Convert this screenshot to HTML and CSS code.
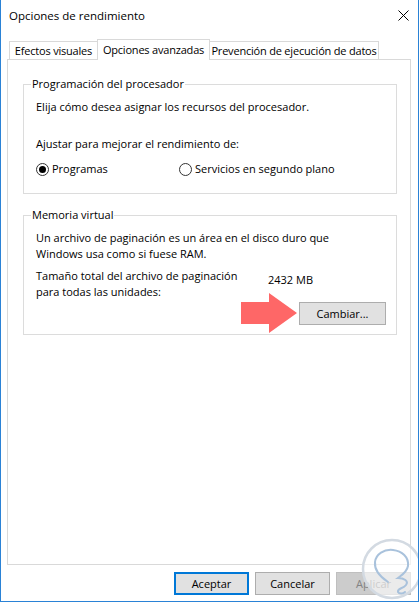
FILE: index.html
```html
<!DOCTYPE html>
<html lang="es">
<head>
<meta charset="utf-8">
<title>Opciones de rendimiento</title>
<link rel="stylesheet" href="styles.css">
</head>
<body>
<div class="window">
  <div class="titlebar">
    <span class="title">Opciones de rendimiento</span>
    <svg class="close" width="11" height="11" viewBox="0 0 11 11"><path d="M0.5 0.5L10.5 10.5M10.5 0.5L0.5 10.5" stroke="#000" stroke-width="1" fill="none"/></svg>
  </div>
  <div class="sheet">
    <div class="tabs">
      <div class="tab tab-first">Efectos visuales</div>
      <div class="tab tab-active">Opciones avanzadas</div>
      <div class="tab tab-last">Prevención de ejecución de datos</div>
    </div>
    <div class="panel">
      <fieldset class="group group-cpu">
        <legend>Programación del procesador</legend>
        <p class="line">Elija cómo desea asignar los recursos del procesador.</p>
        <p class="line line-adjust">Ajustar para mejorar el rendimiento de:</p>
        <div class="radios">
          <label class="radio radio-first"><span class="dot dot-on"></span>Programas</label>
          <label class="radio"><span class="dot"></span>Servicios en segundo plano</label>
        </div>
      </fieldset>
      <fieldset class="group group-mem">
        <legend>Memoria virtual</legend>
        <p class="line">Un archivo de paginación es un área en el disco duro que<br>Windows usa como si fuese RAM.</p>
        <div class="size-row">
          <p class="line size-label">Tamaño total del archivo de paginación<br>para todas las unidades:</p>
          <span class="size-value">2432 MB</span>
        </div>
        <div class="change-row">
          <svg class="arrow" width="57" height="40" viewBox="0 0 57 40"><path d="M0 9H28V0L56 20L28 40V31H0Z" fill="#fe6767"/></svg>
          <span class="btn btn-change">Cambiar...</span>
        </div>
      </fieldset>
    </div>
  </div>
  <div class="buttons">
    <span class="btn btn-default">Aceptar</span>
    <span class="btn">Cancelar</span>
    <span class="btn btn-disabled">Aplicar</span>
  </div>
  <svg class="watermark" width="60" height="62" viewBox="0 0 60 62">
    <circle cx="32" cy="31" r="29" fill="rgba(255,255,255,0.6)" stroke="#d3dae2" stroke-width="2.5"/>
    <path d="M28 44C22 40 14 34 15 24C16 16 24 11 33 12C42 13 49 19 48 28C47 34 42 37 38 40C44 40 49 43 46 47C43 51 37 50 38 54C39 56 43 56 45 54" fill="none" stroke="#a9c2dc" stroke-width="2" stroke-linecap="round"/>
  </svg>
</div>
</body>
</html>
```
FILE: styles.css
```css
* { box-sizing: border-box; }
html, body { margin: 0; padding: 0; background: #fff; }
body {
  font-family: "Open Sans", "Noto Sans", sans-serif;
  font-size: 11px;
  color: #000;
}
.window {
  position: relative;
  width: 419px;
  height: 602px;
  border: 1px solid #2a82d6;
  border-top: none;
  background: #fff;
  overflow: hidden;
}
.titlebar {
  height: 30px;
  display: flex;
  align-items: center;
  justify-content: space-between;
  padding: 0 9px 0 8px;
}
.title { font-size: 11.5px; line-height: 16px; padding-top: 2px; }
.close { display: block; margin-top: 1px; }
.sheet { margin: 8px 7px 0 6px; }
.tabs {
  display: flex;
  align-items: flex-end;
  height: 21px;
  padding-left: 2px;
  position: relative;
  z-index: 1;
}
.tab {
  height: 18px;
  border: 1px solid #d9d9d9;
  border-bottom: none;
  line-height: 17px;
  background: #fff;
  white-space: nowrap;
  text-align: center;
  letter-spacing: -0.2px;
}
.tab-first { width: 88px; border-right: none; }
.tab-active {
  width: 113px;
  height: 21px;
  margin-bottom: -1px;
  padding-top: 1px;
  line-height: 17px;
}
.tab-last { width: 169px; border-left: none; }
.panel {
  border: 1px solid #d9d9d9;
  height: 506px;
  padding: 16px 13px 0 15px;
}
.group {
  margin: 0;
  border: 1px solid #dcdcdc;
  padding: 7px 10px 16px 12px;
  min-width: 0;
}
.group legend {
  padding: 0 1px;
  margin-left: -5px;
  line-height: 16px;
}
.line { margin: 0; line-height: 16px; white-space: nowrap; }
.line-adjust { margin-top: 21px; }
.radios { display: flex; margin-top: 9px; line-height: 16px; }
.radio { display: flex; align-items: center; white-space: nowrap; }
.radio-first { width: 143px; }
.dot {
  width: 13px;
  height: 13px;
  border: 1px solid #333;
  border-radius: 50%;
  margin-right: 3px;
  display: flex;
  align-items: center;
  justify-content: center;
}
.dot-on::after {
  content: "";
  width: 7px;
  height: 7px;
  border-radius: 50%;
  background: #000;
}
.group-mem { margin-top: 13px; padding-bottom: 9px; }
.size-row { display: flex; margin-top: 6px; }
.size-label { width: 232px; }
.size-value { line-height: 16px; margin-top: 4px; }
.change-row {
  display: flex;
  justify-content: flex-end;
  align-items: center;
  margin-top: 1px;
}
.arrow { display: block; margin: -8px 1px -8px 0; }
.btn {
  display: flex;
  align-items: center;
  justify-content: center;
  width: 75px;
  height: 23px;
  border: 1px solid #adadad;
  background: #e1e1e1;
  white-space: nowrap;
}
.btn-change { width: 87px; }
.buttons {
  display: flex;
  justify-content: flex-end;
  gap: 6px;
  margin-top: 7px;
  padding-right: 7px;
}
.btn-default { border: 2px solid #0078d7; }
.btn-disabled { background: #cccccc; border-color: #bfbfbf; color: #838383; }
.watermark { position: absolute; left: 359px; top: 538px; }
```
